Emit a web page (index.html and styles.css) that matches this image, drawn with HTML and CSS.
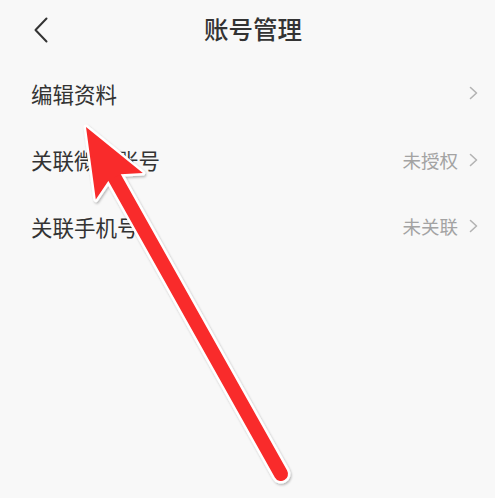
FILE: index.html
```html
<!DOCTYPE html>
<html lang="zh">
<head>
<meta charset="utf-8">
<title>账号管理</title>
<link rel="stylesheet" href="styles.css">
</head>
<body>
<div class="page">
  <header class="header">
    <div class="back">
      <svg width="14" height="26" viewBox="0 0 14 26"><polyline points="12.5,1.5 1.5,13 12.5,24.5" fill="none" stroke="#333" stroke-width="2" stroke-linecap="round" stroke-linejoin="round"/></svg>
    </div>
    <h1 class="title">账号管理</h1>
    <div class="spacer"></div>
  </header>
  <ul class="list">
    <li class="row">
      <span class="label">编辑资料</span>
      <span class="right">
        <svg class="chev" width="9" height="14" viewBox="0 0 9 14"><polyline points="1.5,1.5 7.5,7 1.5,12.5" fill="none" stroke="#b3b3b3" stroke-width="1.6" stroke-linecap="round" stroke-linejoin="round"/></svg>
      </span>
    </li>
    <li class="row">
      <span class="label">关联微信账号</span>
      <span class="right">
        <span class="value">未授权</span>
        <svg class="chev" width="9" height="14" viewBox="0 0 9 14"><polyline points="1.5,1.5 7.5,7 1.5,12.5" fill="none" stroke="#b3b3b3" stroke-width="1.6" stroke-linecap="round" stroke-linejoin="round"/></svg>
      </span>
    </li>
    <li class="row">
      <span class="label">关联手机号</span>
      <span class="right">
        <span class="value">未关联</span>
        <svg class="chev" width="9" height="14" viewBox="0 0 9 14"><polyline points="1.5,1.5 7.5,7 1.5,12.5" fill="none" stroke="#b3b3b3" stroke-width="1.6" stroke-linecap="round" stroke-linejoin="round"/></svg>
      </span>
    </li>
  </ul>
</div>
<svg class="arrow" width="495" height="498" viewBox="0 0 495 498">
  <defs>
    <filter id="sh" x="-20%" y="-20%" width="140%" height="140%">
      <feDropShadow dx="1" dy="1.5" stdDeviation="1.2" flood-color="#000" flood-opacity="0.28"/>
    </filter>
  </defs>
  <g filter="url(#sh)">
    <line x1="112" y1="173" x2="281" y2="474" stroke="#fff" stroke-width="19" stroke-linecap="round"/>
    <polygon points="86,127 142.8,173.1 120.5,174.2 108.3,181 95.8,199.5" fill="#fff" stroke="#fff" stroke-width="5" stroke-linejoin="round"/>
  </g>
  <line x1="112" y1="173" x2="281" y2="474" stroke="#f92b2b" stroke-width="14" stroke-linecap="round"/>
  <polygon points="86,127 142.8,173.1 120.5,174.2 108.3,181 95.8,199.5" fill="#f92b2b"/>
</svg>
</body>
</html>
```
FILE: styles.css
```css
html, body {
  margin: 0;
  padding: 0;
}
body {
  background: #f8f8f8;
  font-family: "Noto Sans CJK SC", "Noto Sans", sans-serif;
  width: 495px;
  height: 498px;
  overflow: hidden;
  position: relative;
}
.page {
  display: flex;
  flex-direction: column;
}
.header {
  height: 60px;
  display: grid;
  grid-template-columns: 1fr auto 1fr;
  align-items: center;
}
.back {
  padding-left: 34px;
  display: flex;
  align-items: center;
  padding-bottom: 1px;
}
.title {
  margin: 0 0 0 11px;
  font-size: 24.5px;
  font-weight: 500;
  color: #333;
  line-height: 1;
  padding-bottom: 1px;
}
.list {
  list-style: none;
  margin: 0;
  padding: 0;
}
.row {
  height: 66.5px;
  display: flex;
  align-items: center;
  justify-content: space-between;
  padding: 0 17px 0 31px;
}
.label {
  font-size: 21.5px;
  color: #333;
  line-height: 1;
}
.right {
  display: flex;
  align-items: center;
  gap: 11px;
}
.value {
  font-size: 18.5px;
  color: #a3a3a3;
  line-height: 1;
}
.chev {
  display: block;
}
.arrow {
  position: absolute;
  left: 0;
  top: 0;
  pointer-events: none;
}
```
